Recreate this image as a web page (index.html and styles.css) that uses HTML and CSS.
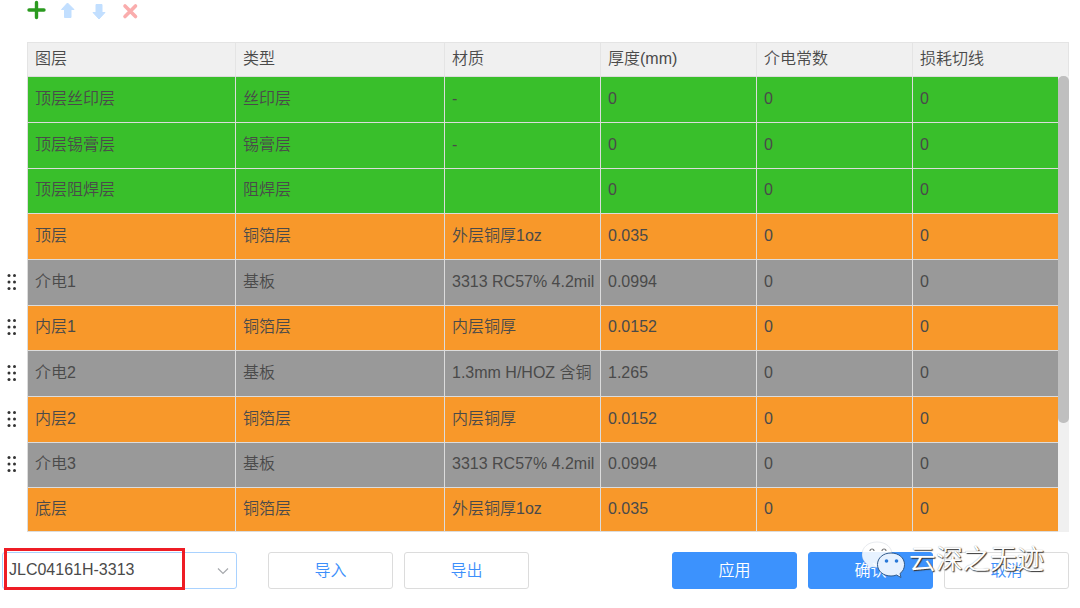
FILE: index.html
```html
<!DOCTYPE html>
<html lang="zh-CN">
<head>
<meta charset="utf-8">
<title>图层</title>
<link rel="stylesheet" href="styles.css">
</head>
<body>
<div class="toolbar">
  <button class="tool" aria-label="添加"><svg viewBox="0 0 20 20"><path d="M10.500 2.500v15M3 10h15" stroke="#2b9a20" stroke-width="3.400" stroke-linecap="round"/></svg></button>
  <button class="tool" aria-label="上移"><svg viewBox="0 0 20 20"><path d="M10.500 3L17 9.500H14V17.500H7.500V9.500H4.500Z" fill="#c2dfff" stroke="#c2dfff" stroke-linejoin="round"/></svg></button>
  <button class="tool" aria-label="下移"><svg viewBox="0 0 20 20"><path d="M11 19L17 12.500H14V4.500H8V12.500H5Z" fill="#c2dfff" stroke="#c2dfff" stroke-linejoin="round"/></svg></button>
  <button class="tool" aria-label="删除"><svg viewBox="0 0 20 20"><path d="M6 6L16.500 16.500M16.500 6L6 16.500" stroke="#faadad" stroke-width="3.600" stroke-linecap="round"/></svg></button>
</div>

<div class="stack">
  <table class="layers">
    <colgroup><col class="c-handle"><col class="c-wide"><col class="c-type"><col class="c-mid"><col class="c-mid"><col class="c-mid"><col class="c-last"></colgroup>
    <thead>
      <tr><td class="handle"></td><th>图层</th><th>类型</th><th>材质</th><th>厚度(mm)</th><th>介电常数</th><th>损耗切线</th></tr>
    </thead>
    <tbody>
      <tr class="green"><td class="handle"></td><td>顶层丝印层</td><td>丝印层</td><td>-</td><td>0</td><td>0</td><td>0</td></tr>
      <tr class="green"><td class="handle"></td><td>顶层锡膏层</td><td>锡膏层</td><td>-</td><td>0</td><td>0</td><td>0</td></tr>
      <tr class="green"><td class="handle"></td><td>顶层阻焊层</td><td>阻焊层</td><td></td><td>0</td><td>0</td><td>0</td></tr>
      <tr class="orange"><td class="handle"></td><td>顶层</td><td>铜箔层</td><td>外层铜厚1oz</td><td>0.035</td><td>0</td><td>0</td></tr>
      <tr class="gray"><td class="handle"><svg class="grip" viewBox="0 0 10 18"><use href="#dots"/></svg></td><td>介电1</td><td>基板</td><td>3313 RC57% 4.2mil</td><td>0.0994</td><td>0</td><td>0</td></tr>
      <tr class="orange"><td class="handle"><svg class="grip" viewBox="0 0 10 18"><use href="#dots"/></svg></td><td>内层1</td><td>铜箔层</td><td>内层铜厚</td><td>0.0152</td><td>0</td><td>0</td></tr>
      <tr class="gray"><td class="handle"><svg class="grip" viewBox="0 0 10 18"><use href="#dots"/></svg></td><td>介电2</td><td>基板</td><td>1.3mm H/HOZ 含铜</td><td>1.265</td><td>0</td><td>0</td></tr>
      <tr class="orange"><td class="handle"><svg class="grip" viewBox="0 0 10 18"><use href="#dots"/></svg></td><td>内层2</td><td>铜箔层</td><td>内层铜厚</td><td>0.0152</td><td>0</td><td>0</td></tr>
      <tr class="gray"><td class="handle"><svg class="grip" viewBox="0 0 10 18"><use href="#dots"/></svg></td><td>介电3</td><td>基板</td><td>3313 RC57% 4.2mil</td><td>0.0994</td><td>0</td><td>0</td></tr>
      <tr class="orange"><td class="handle"></td><td>底层</td><td>铜箔层</td><td>外层铜厚1oz</td><td>0.035</td><td>0</td><td>0</td></tr>
    </tbody>
  </table>
  <div class="scroll"><div class="scroll-head"></div><div class="track"><div class="thumb"></div></div></div>
</div>

<div class="footer">
  <div class="picker">
    <select aria-label="叠层结构"><option>JLC04161H-3313</option></select>
    <svg class="chevron" viewBox="0 0 12 8"><path d="M1 1.500L6 6.500L11 1.500" fill="none" stroke="#a6a9ad" stroke-width="1.200"/></svg>
    <div class="highlight"></div>
  </div>
  <div class="group">
    <button class="btn">导入</button>
    <button class="btn">导出</button>
  </div>
  <div class="group end">
    <button class="btn primary">应用</button>
    <button class="btn primary">确认</button>
    <button class="btn">取消</button>
    <div class="watermark">
      <svg class="bubbles" viewBox="0 0 46 38">
        <path d="M17 1C8 1 2 6.500 2 13.500C2 18 4.500 21.500 8 24L7 28.500L12 26C21 28 32 23 32 13.500C32 6.500 26 1 17 1Z" fill="#fff" fill-opacity=".88" stroke="#8d9aab" stroke-opacity=".35" stroke-width=".6"/>
        <path d="M10 10a2 2 0 0 1 4 0M22 10a2 2 0 0 1 4 0" fill="none" stroke="#777" stroke-width="1.200"/>
        <path d="M31 12C23 12 17.500 17 17.500 23.500C17.500 30 23 35 31 35C33 35 35 34.700 36.500 34L41 36.500L40 32.500C43 30.500 44.500 27 44.500 23.500C44.500 17 39 12 31 12Z" fill="#e6f1ff" stroke="#315a8b" stroke-width="1"/>
        <circle cx="26.500" cy="20" r="1.800" fill="#2878d8"/><circle cx="36.500" cy="20" r="1.800" fill="#2878d8"/>
      </svg>
      <span>云深之无迹</span>
    </div>
  </div>
</div>

<svg class="defs" aria-hidden="true"><defs><g id="dots" fill="#333"><circle cx="2" cy="2.500" r="1.500"/><circle cx="7.500" cy="2.500" r="1.500"/><circle cx="2" cy="9" r="1.500"/><circle cx="7.500" cy="9" r="1.500"/><circle cx="2" cy="15.500" r="1.500"/><circle cx="7.500" cy="15.500" r="1.500"/></g></defs></svg>
</body>
</html>
```

FILE: styles.css
```css
* { box-sizing: border-box; }
body {
  margin: 0;
  background: #fff;
  color: #4a4a4a;
  font: 350 16px/24px "Liberation Sans", "Noto Sans CJK SC", sans-serif;
}
button, select { font: inherit; }
.toolbar { display: flex; gap: 11px; padding: 0 26px; height: 42px; }
.tool { width: 20px; height: 20px; padding: 0; border: 0; background: none; }
.tool svg { display: block; width: 20px; height: 20px; }

.stack { display: flex; padding-right: 11px; }
.layers { flex: 1; min-width: 0; table-layout: fixed; border-collapse: separate; border-spacing: 0; }
.c-handle { width: 27px; }
.c-wide { width: 208px; }
.c-type { width: 209px; }
.c-mid { width: 156px; }
.c-last { width: 146px; }
.layers th, .layers td {
  padding: 0 0 2px 7px;
  text-align: left;
  font-weight: inherit;
  white-space: nowrap;
  overflow: hidden;
  border-left: 1px solid #dcdcdc;
  border-bottom: 1px solid #dcdcdc;
}
.layers th { height: 35px; background: #f0f0f0; border-top: 1px solid #e4e4e4; border-left-color: #e4e4e4; }
.layers tbody td { height: 46px; }
.layers tbody tr:nth-child(3n) td { height: 45px; }
.layers tbody tr:last-child td { height: 44px; }
.layers .handle { border: 0; background: #fff; padding-bottom: 3px; }
.green td { background: #39bf2b; }
.orange td { background: #f8982a; }
.gray td { background: #999; }
.grip { display: block; width: 10px; height: 18px; }

.scroll { display: flex; flex-direction: column; width: 11px; }
.scroll-head { height: 34px; background: #f0f0f0; border: 1px solid #e4e4e4; border-width: 1px 1px 0 0; }
.track { flex: 1; background: #f0f0f0; }
.thumb { height: 76%; border-radius: 5px; background: #bfbfbf; }

.footer { display: flex; align-items: center; padding: 20px 11px 16px 2px; }
.picker { position: relative; width: 235px; margin-right: 31px; }
.picker select {
  display: block;
  width: 100%;
  height: 37px;
  padding: 0 30px 2px 6px;
  appearance: none;
  color: #4a4a4a;
  background: #fff;
  border: 1px solid #a9d2ff;
  border-radius: 3px;
}
.chevron { position: absolute; right: 8px; top: 15px; width: 12px; height: 8px; pointer-events: none; }
.highlight { position: absolute; left: 2px; top: -4px; width: 181px; height: 42px; border: 3px solid #ee1c25; pointer-events: none; }
.group { display: flex; gap: 11px; }
.end { position: relative; margin-left: auto; }
.btn {
  width: 125px;
  height: 37px;
  padding: 0;
  color: #3d8ffb;
  background: #fff;
  border: 1px solid #dcdcdc;
  border-radius: 3px;
}
.primary { color: #fff; background: #3c92fd; border-color: #3c92fd; }
.watermark {
  position: absolute;
  right: 25px;
  top: -12px;
  display: flex;
  align-items: center;
  gap: 3px;
  color: #fff;
  font-size: 27px;
  line-height: 40px;
  white-space: nowrap;
  text-shadow: 1px 1px 1px #333, 0 0 1px #999;
  pointer-events: none;
}
.bubbles { width: 46px; height: 38px; }
.defs { position: absolute; width: 0; height: 0; }
```
